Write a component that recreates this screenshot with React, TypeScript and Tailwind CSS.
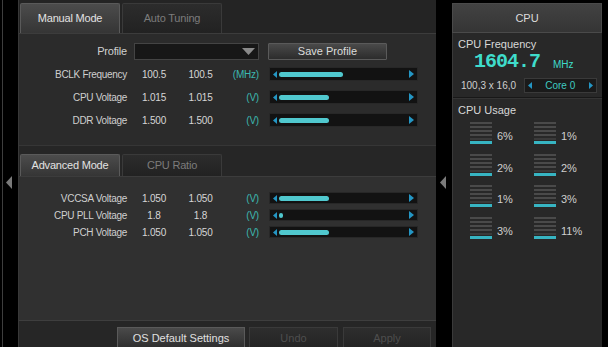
import React from "react";

const F = "font-['Liberation_Sans',Arial,sans-serif]";

function Tri({ dir, color, w = 4, h = 7 }: { dir: "l" | "r"; color: string; w?: number; h?: number }) {
  return (
    <svg width={w} height={h} viewBox={`0 0 ${w} ${h}`} className="block shrink-0">
      {dir === "l" ? (
        <polygon points={`${w},0 0,${h / 2} ${w},${h}`} fill={color} />
      ) : (
        <polygon points={`0,0 ${w},${h / 2} 0,${h}`} fill={color} />
      )}
    </svg>
  );
}

function Slider({ fill, h }: { fill: number; h: number }) {
  return (
    <div
      className="w-[149px] bg-[#121212] border border-[#272727] flex items-center pl-[3px] pr-[3px]"
      style={{ height: h }}
    >
      <Tri dir="l" color="#2496c4" w={4} h={7} />
      <div className="flex-1 flex items-center pl-[2px]">
        <div className="h-[5px] rounded-full bg-[#50c8ce]" style={{ width: fill }} />
      </div>
      <Tri dir="r" color="#2496c4" w={5} h={8} />
    </div>
  );
}

function Row({ label, v1, v2, unit, fill, h }: { label: string; v1: string; v2: string; unit: string; fill: number; h: number }) {
  return (
    <div className="flex items-center" style={{ height: h }}>
      <div className="w-[108px] text-right text-[10px] tracking-[-0.3px] text-[#cfcfcf]">{label}</div>
      <div className="w-[46px] ml-[4px] text-center text-[10px] tracking-[-0.2px] text-[#d6d6d6]">{v1}</div>
      <div className="w-[47px] text-center text-[10px] tracking-[-0.2px] text-[#d6d6d6]">{v2}</div>
      <div className="w-[35px] text-right text-[10px] tracking-[-0.2px] text-[#3cb8b0]">{unit}</div>
      <div className="ml-[10px]">
        <Slider fill={fill} h={h} />
      </div>
    </div>
  );
}

function Tab({ label, active, h }: { label: string; active: boolean; h: number }) {
  return (
    <div
      className={
        "w-[100px] flex items-center justify-center text-[11px] tracking-[-0.2px] rounded-t-[2px] border border-b-0 " +
        (active
          ? "bg-gradient-to-b from-[#4c4c4c] to-[#353535] border-[#5a5a5a] text-[#e2e2e2]"
          : "bg-gradient-to-b from-[#2c2c2c] to-[#222222] border-[#3a3a3a] text-[#7c7c7c]")
      }
      style={{ height: h }}
    >
      {label}
    </div>
  );
}

function Usage({ pct }: { pct: string }) {
  return (
    <div className="flex items-start w-[64px]">
      <div className="w-[22px] flex flex-col">
        <div className="h-[2px] bg-[#4a4a4a]" />
        <div className="h-[2px] mt-[2px] bg-[#4a4a4a]" />
        <div className="h-[2px] mt-[2px] bg-[#4a4a4a]" />
        <div className="h-[2px] mt-[2px] bg-[#4a4a4a]" />
        <div className="h-[2px] mt-[2px] bg-[#3a3a3a]" />
        <div className="h-[3px] mt-[1px] bg-[#37b4c2]" />
      </div>
      <div className="ml-[5px] mt-[6px] text-[11px] text-[#cfcfcf]">{pct}</div>
    </div>
  );
}

export default function App() {
  return (
    <div className={"w-[608px] h-[347px] bg-black flex overflow-hidden " + F}>
      {/* left strip */}
      <div className="w-[18px] h-full flex">
        <div className="w-[2px]" />
        <div className="w-[1px] h-full bg-[#3e3e3e]" />
        <div className="flex-1 flex flex-col pt-[176px] pl-[3px]">
          <Tri dir="l" color="#7a7a7a" w={6} h={13} />
        </div>
      </div>

      {/* main panel */}
      <div className="w-[418px] h-full flex flex-col bg-[#2b2b2b] border-l border-[#383838]">
        {/* top tabs */}
        <div className="h-[34px] bg-[#242424] pt-[3px] pl-[1px] flex gap-[2px] border-b border-[#3c3c3c]">
          <Tab label="Manual Mode" active h={30} />
          <Tab label="Auto Tuning" active={false} h={30} />
        </div>

        {/* upper content */}
        <div className="h-[111px] pt-[9px] flex flex-col">
          <div className="flex items-center h-[17px]">
            <div className="w-[108px] text-right text-[11px] tracking-[-0.2px] text-[#d0d0d0]">Profile</div>
            <div className="ml-[7px] w-[125px] h-[17px] bg-[#171717] border border-[#444] flex items-center justify-end pr-[3px]">
              <svg width="13" height="7" viewBox="0 0 13 7" className="block">
                <polygon points="0,0 13,0 6.5,7" fill="#8a8a8a" />
              </svg>
            </div>
            <div className="ml-[9px] w-[119px] h-[17px] bg-gradient-to-b from-[#4a4a4a] to-[#2c2c2c] border border-[#5a5a5a] rounded-[1px] flex items-center justify-center text-[11px] text-[#dcdcdc]">
              Save Profile
            </div>
          </div>
          <div className="mt-[7px] flex flex-col gap-[9px]">
            <Row label="BCLK Frequency" v1="100.5" v2="100.5" unit="(MHz)" fill={64} h={14} />
            <Row label="CPU Voltage" v1="1.015" v2="1.015" unit="(V)" fill={50} h={14} />
            <Row label="DDR Voltage" v1="1.500" v2="1.500" unit="(V)" fill={50} h={14} />
          </div>
        </div>

        {/* advanced tabs */}
        <div className="border-t border-[#363636] bg-[#262626] pt-[8px] pl-[1px] flex gap-[2px] border-b border-b-[#3c3c3c]">
          <Tab label="Advanced Mode" active h={22} />
          <Tab label="CPU Ratio" active={false} h={22} />
        </div>

        {/* lower content */}
        <div className="flex-1 bg-[#303030] pt-[15px] flex flex-col gap-[5px]">
          <Row label="VCCSA Voltage" v1="1.050" v2="1.050" unit="(V)" fill={50} h={12} />
          <Row label="CPU PLL Voltage" v1="1.8" v2="1.8" unit="(V)" fill={4} h={12} />
          <Row label="PCH Voltage" v1="1.050" v2="1.050" unit="(V)" fill={50} h={12} />
        </div>

        {/* bottom buttons */}
        <div className="h-[27px] border-t border-[#3e3e3e] bg-[#262626] pt-[6px] flex justify-end pr-[5px] gap-[4px]">
          <div className="w-[128px] h-[22px] bg-gradient-to-b from-[#4a4a4a] to-[#2e2e2e] border border-[#5a5a5a] flex items-center justify-center text-[11px] text-[#e0e0e0]">
            OS Default Settings
          </div>
          <div className="w-[89px] h-[22px] bg-gradient-to-b from-[#2e2e2e] to-[#242424] border border-[#3a3a3a] flex items-center justify-center text-[11px] text-[#4e4e4e]">
            Undo
          </div>
          <div className="ml-[1px] w-[88px] h-[22px] bg-gradient-to-b from-[#2e2e2e] to-[#242424] border border-[#3a3a3a] flex items-center justify-center text-[11px] text-[#4e4e4e]">
            Apply
          </div>
        </div>
      </div>

      {/* gap with arrow */}
      <div className="w-[16px] h-full flex flex-col pt-[176px] pl-[4px]">
        <Tri dir="l" color="#7a7a7a" w={6} h={13} />
      </div>

      {/* right panel */}
      <div className="w-[150px] h-full pt-[3px] flex flex-col">
        <div className="h-[30px] bg-gradient-to-b from-[#424242] to-[#353535] border border-[#4a4a4a] flex items-center justify-center text-[11px] text-[#dcdcdc]">
          CPU
        </div>
        <div className="flex-1 bg-[#282828] border-l border-[#3a3a3a] flex flex-col">
          <div className="px-[5px] pt-[5px]">
            <div className="h-[13px] leading-[13px] text-[11px] text-[#d8d8d8]">CPU Frequency</div>
            <div className="h-[19px] flex items-end pl-[16px] mt-[1px]">
              <span className="font-['Liberation_Mono',monospace] font-bold text-[20px] leading-[18px] tracking-[-1px] text-[#3fdccb]">
                1604.7
              </span>
              <span className="ml-[13px] mb-[1px] text-[10px] leading-[10px] text-[#3fdccb]">MHz</span>
            </div>
            <div className="mt-[7px] flex items-center h-[15px]">
              <div className="w-[67px] pl-[3px] text-[10px] text-[#cfcfcf]">100,3 x 16,0</div>
              <div className="w-[75px] h-[15px] bg-[#1a1a1a] border border-[#3a3a3a] flex items-center px-[3px]">
                <Tri dir="l" color="#2496c4" w={4} h={7} />
                <div className="flex-1 text-center text-[10px] text-[#3fc9c0]">Core 0</div>
                <Tri dir="r" color="#2496c4" w={4} h={7} />
              </div>
            </div>
          </div>
          <div className="mt-[4px] h-[2px] border-t border-[#181818] border-b border-b-[#343434]" />
          <div className="px-[5px] pt-[5px]">
            <div className="h-[13px] leading-[13px] text-[11px] text-[#d8d8d8]">CPU Usage</div>
          </div>
          <div className="pl-[17px] pt-[5px] grid grid-cols-[64px_64px] gap-y-[9px]">
            <Usage pct="6%" />
            <Usage pct="1%" />
            <Usage pct="2%" />
            <Usage pct="2%" />
            <Usage pct="1%" />
            <Usage pct="3%" />
            <Usage pct="3%" />
            <Usage pct="11%" />
          </div>
        </div>
      </div>
      <div className="flex-1" />
    </div>
  );
}
